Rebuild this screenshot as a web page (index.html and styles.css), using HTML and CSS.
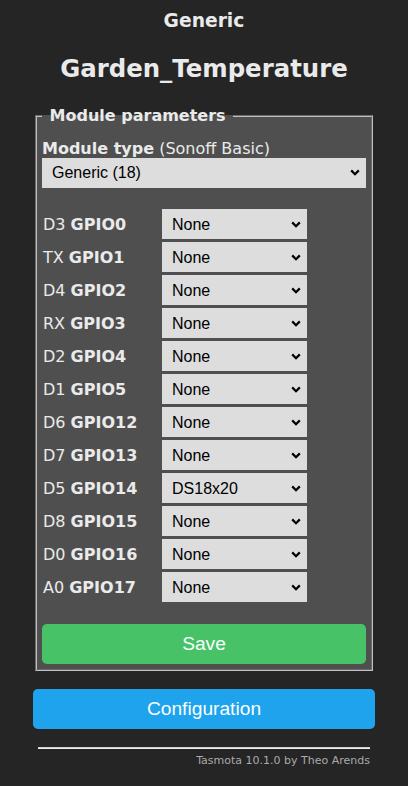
FILE: index.html
```html
<!DOCTYPE html>
<html>
<head>
<meta charset="utf-8">
<title>Generic - Configure Module</title>
<link rel="stylesheet" href="styles.css">
</head>
<body>
<div class="page">
  <div class="header">
    <h3 class="device">Generic</h3>
    <h2 class="name">Garden_Temperature</h2>
  </div>
  <fieldset class="params">
    <legend class="params-legend"><b>&nbsp;Module parameters&nbsp;</b></legend>
    <div class="module-type"><b>Module type</b> (Sonoff Basic)</div>
    <select class="sel sel-module"><option>Generic (18)</option></select>
    <div class="gpio-grid">
      <div class="gpio-label">D3 <b>GPIO0</b></div><select class="sel"><option>None</option></select>
      <div class="gpio-label">TX <b>GPIO1</b></div><select class="sel"><option>None</option></select>
      <div class="gpio-label">D4 <b>GPIO2</b></div><select class="sel"><option>None</option></select>
      <div class="gpio-label">RX <b>GPIO3</b></div><select class="sel"><option>None</option></select>
      <div class="gpio-label">D2 <b>GPIO4</b></div><select class="sel"><option>None</option></select>
      <div class="gpio-label">D1 <b>GPIO5</b></div><select class="sel"><option>None</option></select>
      <div class="gpio-label">D6 <b>GPIO12</b></div><select class="sel"><option>None</option></select>
      <div class="gpio-label">D7 <b>GPIO13</b></div><select class="sel"><option>None</option></select>
      <div class="gpio-label">D5 <b>GPIO14</b></div><select class="sel"><option>DS18x20</option></select>
      <div class="gpio-label">D8 <b>GPIO15</b></div><select class="sel"><option>None</option></select>
      <div class="gpio-label">D0 <b>GPIO16</b></div><select class="sel"><option>None</option></select>
      <div class="gpio-label">A0 <b>GPIO17</b></div><select class="sel"><option>None</option></select>
    </div>
    <button class="btn btn-save">Save</button>
  </fieldset>
  <button class="btn btn-config">Configuration</button>
  <div class="footer">
    <hr class="footer-rule">
    <a class="footer-link">Tasmota 10.1.0 by Theo Arends</a>
  </div>
</div>
</body>
</html>
```

FILE: styles.css
```css
html, body {
  margin: 0;
  padding: 0;
  background: #252525;
}
body {
  font-family: "DejaVu Sans", Verdana, sans-serif;
  font-size: 16px;
  color: #eaeaea;
}
.page {
  width: 342px;
  margin: 0 auto;
}
.header {
  text-align: center;
  padding-top: 10px;
}
.device {
  margin: 0;
  font-size: 18.72px;
  line-height: 22px;
  font-weight: bold;
}
.name {
  margin: 23px 0 24px 0;
  font-size: 24.4px;
  line-height: 28px;
  font-weight: bold;
}
.params {
  margin: 0 2px;
  padding: 5px;
  border: 2px groove rgb(192, 192, 192);
  background: #4f4f4f;
}
.params-legend {
  padding: 0 2px;
  font-size: 16px;
  line-height: 18.6px;
}
.module-type {
  margin-top: 8px;
  line-height: 19px;
}
.sel {
  display: block;
  width: 100%;
  height: 30px;
  box-sizing: border-box;
  margin: 0;
  border: 0;
  border-radius: 0;
  padding: 0 24px 0 10px;
  font-family: "Liberation Sans", Arial, sans-serif;
  font-size: 16px;
  color: #000;
  background-color: #dddddd;
  background-image: url("data:image/svg+xml,%3Csvg xmlns='http://www.w3.org/2000/svg' width='10' height='7' viewBox='0 0 10 7'%3E%3Cpath d='M1.2 1.4 L5 5.2 L8.8 1.4' fill='none' stroke='%23000' stroke-width='2.2'/%3E%3C/svg%3E");
  background-repeat: no-repeat;
  background-position: right 6px center;
  background-size: 10px 7px;
  -webkit-appearance: none;
  appearance: none;
}
.gpio-grid {
  margin-top: 21.5px;
  display: grid;
  grid-template-columns: 120px 145px;
  row-gap: 3px;
  align-items: center;
}
.gpio-label {
  line-height: 18.6px;
  padding-left: 1px;
  padding-top: 2px;
}
.btn {
  display: block;
  width: 100%;
  height: 40px;
  border: 0;
  border-radius: 0.3rem;
  padding: 0;
  font-family: "Liberation Sans", Arial, sans-serif;
  font-size: 19.2px;
  line-height: 40px;
  color: #faffff;
  cursor: pointer;
}
.btn-save {
  margin-top: 22px;
  background: #47c266;
}
.btn-config {
  margin-top: 18px;
  background: #1fa3ec;
}
.footer {
  padding: 0 5px;
  text-align: right;
  font-size: 11px;
}
.footer-rule {
  margin: 18px 0 5px 0;
  height: 0;
  border: 0;
  border-top: 1px solid #cfcfcf;
  border-bottom: 1px solid #eeeeee;
}
.footer-link {
  color: #aaa;
  text-decoration: none;
  line-height: 13px;
}
```
